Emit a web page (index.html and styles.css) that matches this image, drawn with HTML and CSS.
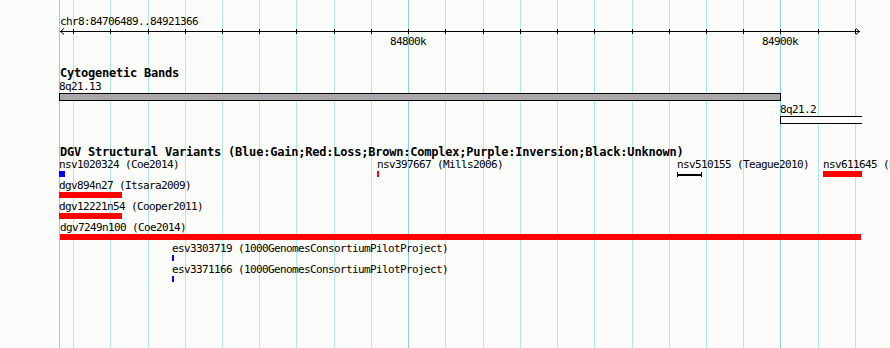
FILE: index.html
```
<!DOCTYPE html>
<html>
    <head>
        <meta charset="UTF-8">
        <title>chr8:84706489..84921366</title>
        <link rel="stylesheet" href="styles.css">
    </head>
    <body>
        <div class="browser">
            <div class="grid" id="grid"></div>

            <section class="track ruler">
                <div class="name">chr8:84706489..84921366</div>
                <svg class="axis" id="axis" width="890" height="7"></svg>
                <div class="scale" id="scale"></div>
            </section>

            <section class="track bands">
                <h2 class="track-title">Cytogenetic Bands</h2>
                <div class="band-row">
                    <div class="feature" style="left:59px">
                        <span class="name">8q21.13</span>
                        <div class="band gpos" style="width:722px"></div>
                    </div>
                </div>
                <div class="band-row">
                    <div class="feature" style="left:780px">
                        <span class="name">8q21.2</span>
                        <div class="band gneg clipped" style="width:82px"></div>
                    </div>
                </div>
            </section>

            <section class="track dgv">
                <h2 class="track-title">DGV Structural Variants (Blue:Gain;Red:Loss;Brown:Complex;Purple:Inversion;Black:Unknown)</h2>
                <div class="row">
                    <div class="feature" style="left:59px">
                        <span class="name">nsv1020324 (Coe2014)</span>
                        <div class="glyph gain" style="width:6px"></div>
                    </div>
                    <div class="feature" style="left:377px">
                        <span class="name">nsv397667 (Mills2006)</span>
                        <div class="glyph loss" style="width:2px"></div>
                    </div>
                    <div class="feature" style="left:677px">
                        <span class="name">nsv510155 (Teague2010)</span>
                        <div class="glyph unknown" style="width:25px"></div>
                    </div>
                    <div class="feature" style="left:823px">
                        <span class="name">nsv611645 (Perry2008)</span>
                        <div class="glyph loss" style="width:39px"></div>
                    </div>
                </div>
                <div class="row">
                    <div class="feature" style="left:59px">
                        <span class="name">dgv894n27 (Itsara2009)</span>
                        <div class="glyph loss" style="width:63px"></div>
                    </div>
                </div>
                <div class="row">
                    <div class="feature" style="left:59px">
                        <span class="name">dgv12221n54 (Cooper2011)</span>
                        <div class="glyph loss" style="width:63px"></div>
                    </div>
                </div>
                <div class="row">
                    <div class="feature" style="left:60px">
                        <span class="name">dgv7249n100 (Coe2014)</span>
                        <div class="glyph loss" style="width:801px"></div>
                    </div>
                </div>
                <div class="row">
                    <div class="feature" style="left:172px">
                        <span class="name">esv3303719 (1000GenomesConsortiumPilotProject)</span>
                        <div class="glyph gain" style="width:2px"></div>
                    </div>
                </div>
                <div class="row">
                    <div class="feature" style="left:172px">
                        <span class="name">esv3371166 (1000GenomesConsortiumPilotProject)</span>
                        <div class="glyph gain" style="width:2px"></div>
                    </div>
                </div>
            </section>
        </div>

        <script>
            // visible region
            var start = 84706489;
            var end   = 84921366;
            var left  = 60;
            var width = 800;
            var scale = width / (end - start + 1);

            function px(bp){
                return Math.round(left + (bp - start) * scale);
            }

            var grid  = document.getElementById("grid");
            var axis  = document.getElementById("axis");
            var lbls  = document.getElementById("scale");
            var ns    = "http://www.w3.org/2000/svg";

            function line(x1, y1, x2, y2){
                var l = document.createElementNS(ns, "line");
                l.setAttribute("x1", x1);
                l.setAttribute("y1", y1);
                l.setAttribute("x2", x2);
                l.setAttribute("y2", y2);
                axis.appendChild(l);
            }
            function gridline(x, major){
                var g = document.createElement("div");
                g.className = major ? "gridline major" : "gridline";
                g.style.left = x + "px";
                grid.appendChild(g);
            }

            // panel edge
            gridline(59, true);

            line(left, 3.5, left + width, 3.5);
            var arrows = ["64,0.5 60.5,3.5 64,6.5", "856,0.5 859.5,3.5 856,6.5"];
            arrows.forEach(function(p){
                var a = document.createElementNS(ns, "polyline");
                a.setAttribute("points", p);
                axis.appendChild(a);
            });

            for (var bp = Math.ceil(start / 10000) * 10000; bp <= end; bp += 10000){
                var x = px(bp);
                var major = bp % 100000 === 0;
                gridline(x, major);
                line(x + 0.5, 1, x + 0.5, 6);
                if (major){
                    var t = document.createElement("span");
                    t.className = "tick-label";
                    t.style.left = x + "px";
                    t.textContent = (bp / 1000) + "k";
                    lbls.appendChild(t);
                }
            }
        </script>
    </body>
</html>
```

FILE: styles.css
```
body{
    margin: 0;
    background: #fcfdfa;
    font-family: "DejaVu Sans Mono", monospace;
    color: #000;
}
.browser{
    position: relative;
    width: 890px;
    height: 348px;
    overflow: hidden;
}
.grid{
    position: absolute;
    top: 0;
    left: 0;
    right: 0;
    bottom: 0;
}
.gridline{
    position: absolute;
    top: 0;
    bottom: 0;
    width: 1px;
    background: #ade9ef;
}
.gridline.major{
    background: #8ccdee;
}
.track{
    position: relative;
}
.name{
    display: block;
    font-size: 11px;
    line-height: 11px;
    height: 11px;
    letter-spacing: -0.62px;
    white-space: nowrap;
}
.track-title{
    margin: 0;
    padding-left: 60px;
    font-size: 12px;
    line-height: 13px;
    font-weight: bold;
    letter-spacing: -0.22px;
    white-space: nowrap;
}

/* ruler */
.ruler{
    padding-top: 16px;
    height: 30px;
}
.ruler > .name{
    padding-left: 60px;
}
.axis{
    display: block;
    margin-top: 1px;
    shape-rendering: crispEdges;
}
.axis line, .axis polyline{
    stroke: #000;
    stroke-width: 1;
    fill: none;
}
.axis polyline{
    shape-rendering: auto;
}
.scale{
    position: relative;
    height: 11px;
}
.tick-label{
    position: absolute;
    top: 1px;
    transform: translateX(-50%);
    font-size: 11px;
    line-height: 11px;
    letter-spacing: -0.62px;
    white-space: nowrap;
}

/* features */
.feature{
    position: absolute;
    top: 0;
}
.bands{
    margin-top: 21px;
}
.bands .track-title{
    margin-bottom: 1px;
}
.band-row{
    position: relative;
    height: 23px;
}
.band{
    box-sizing: border-box;
    margin-top: 1px;
    height: 8px;
    border: 1px solid #000;
}
.gpos{
    background: #aaa7aa;
}
.gneg{
    background: #fff;
}
.clipped{
    border-right: 0;
}
.dgv{
    margin-top: 19px;
}
.row{
    position: relative;
    height: 21px;
}
.glyph{
    position: relative;
    margin-top: 1px;
    height: 6px;
}
.gain{
    background: #0000ff;
}
.loss{
    background: #ff0000;
}
.unknown{
    box-sizing: border-box;
    border-left: 1px solid #000;
    border-right: 1px solid #000;
    height: 5px;
    margin-top: 2px;
}
.unknown::before{
    content: "";
    position: absolute;
    left: 0;
    right: 0;
    top: 2px;
    height: 2px;
    background: #000;
}
```
